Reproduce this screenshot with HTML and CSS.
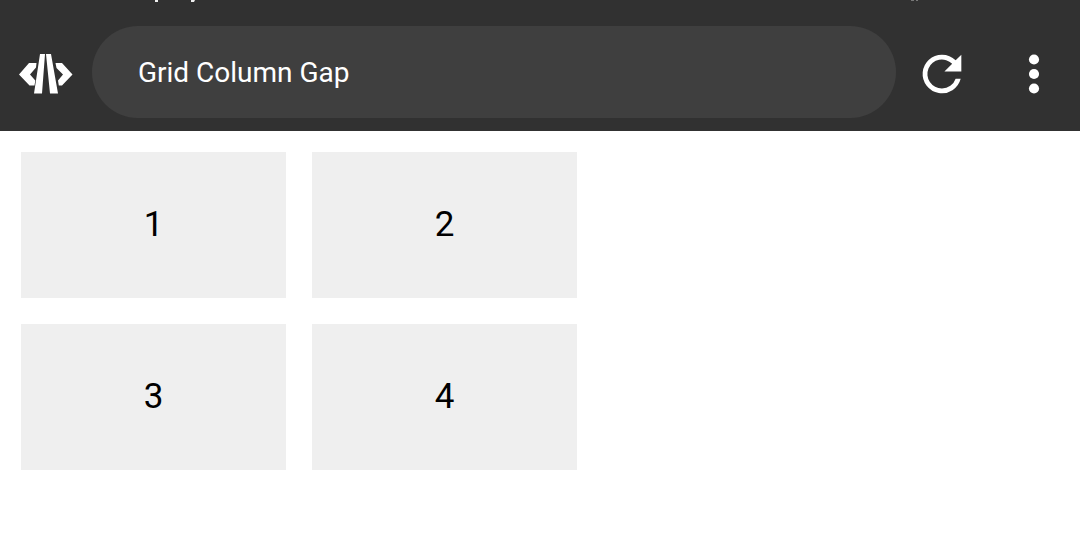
FILE: index.html
```html
<!DOCTYPE html>
<html lang="en">
<head>
<meta charset="utf-8">
<meta name="viewport" content="width=device-width, initial-scale=1">
<title>Grid Column Gap</title>
<link rel="stylesheet" href="styles.css">
</head>
<body>
<header class="toolbar">
  <svg class="status-edge status-edge-left" viewBox="0 0 40 3" aria-hidden="true"><path d="M0 0h3v2H0zM36 0h4l-1 2h-3z"/></svg>
  <svg class="status-edge status-edge-right" viewBox="0 0 8 1" aria-hidden="true"><path d="M0 0h3v1H0zM5 0h2v1H5z"/></svg>
  <button class="icon-button code-button" type="button" aria-label="View code">
    <svg class="code-icon" viewBox="0 0 54 40" aria-hidden="true">
      <path d="M21 0h5l-3 39.500h-8zM27 0h5l7 39.500h-8zM0 20.500L10 9h7.500l-.5 4.500-6 7 5.300 6-.8 5H10.500zM53.500 20.500L43 9h-6.500l1 5 6.500 6.500-5 6 .8 5H43z"/>
    </svg>
  </button>
  <input class="title-field" type="text" value="Grid Column Gap" aria-label="Page title">
  <div class="actions">
    <button class="icon-button" type="button" aria-label="Refresh">
      <svg class="action-icon" viewBox="0 0 24 24" aria-hidden="true"><path d="M17.650 6.350A7.958 7.958 0 0 0 12 4a8 8 0 1 0 7.730 10h-2.080A5.990 5.990 0 0 1 12 18a6 6 0 1 1 4.220-10.220L13 11h7V4z"/></svg>
    </button>
    <button class="icon-button" type="button" aria-label="More options">
      <svg class="action-icon" viewBox="0 0 24 24" aria-hidden="true"><circle cx="12" cy="6" r="2.100"/><circle cx="12" cy="12" r="2.100"/><circle cx="12" cy="18" r="2.100"/></svg>
    </button>
  </div>
</header>
<main class="grid">
  <div class="cell">1</div>
  <div class="cell">2</div>
  <div class="cell">3</div>
  <div class="cell">4</div>
</main>
</body>
</html>
```
FILE: styles.css
```css
* {
  box-sizing: border-box;
}

body {
  margin: 0;
  background: #fff;
  color: #000;
  font-family: Roboto, "Liberation Sans", sans-serif;
}

.toolbar {
  position: relative;
  display: flex;
  align-items: center;
  gap: 19px;
  padding: 26px 17px 13px 19px;
  background: #313131;
}

.status-edge {
  position: absolute;
  top: 0;
  fill: #eee;
}

.status-edge-left {
  left: 155px;
  width: 40px;
  height: 3px;
}

.status-edge-right {
  left: 911px;
  width: 8px;
  height: 1px;
  fill: #777;
}

.icon-button {
  display: flex;
  padding: 0;
  border: 0;
  background: none;
  color: #fff;
  cursor: pointer;
}

.icon-button svg {
  fill: currentColor;
}

.code-icon {
  width: 54px;
  height: 40px;
}

.action-icon {
  width: 58px;
  height: 58px;
}

.title-field {
  flex: 1;
  min-width: 0;
  height: 92px;
  padding: 0 46px;
  border: 0;
  border-radius: 46px;
  background: #3f3f3f;
  color: #fff;
  font: 28px Roboto, "Liberation Sans", sans-serif;
}

.actions {
  display: flex;
  gap: 34px;
  margin-left: -2px;
  padding-top: 4px;
}

.code-button {
  padding-top: 4px;
}

.grid {
  display: grid;
  grid-template-columns: repeat(2, 265px);
  gap: 26px;
  padding: 21px;
}

.cell {
  padding: 52px;
  background: #efefef;
  font-size: 35px;
  line-height: 42px;
  text-align: center;
}
```
